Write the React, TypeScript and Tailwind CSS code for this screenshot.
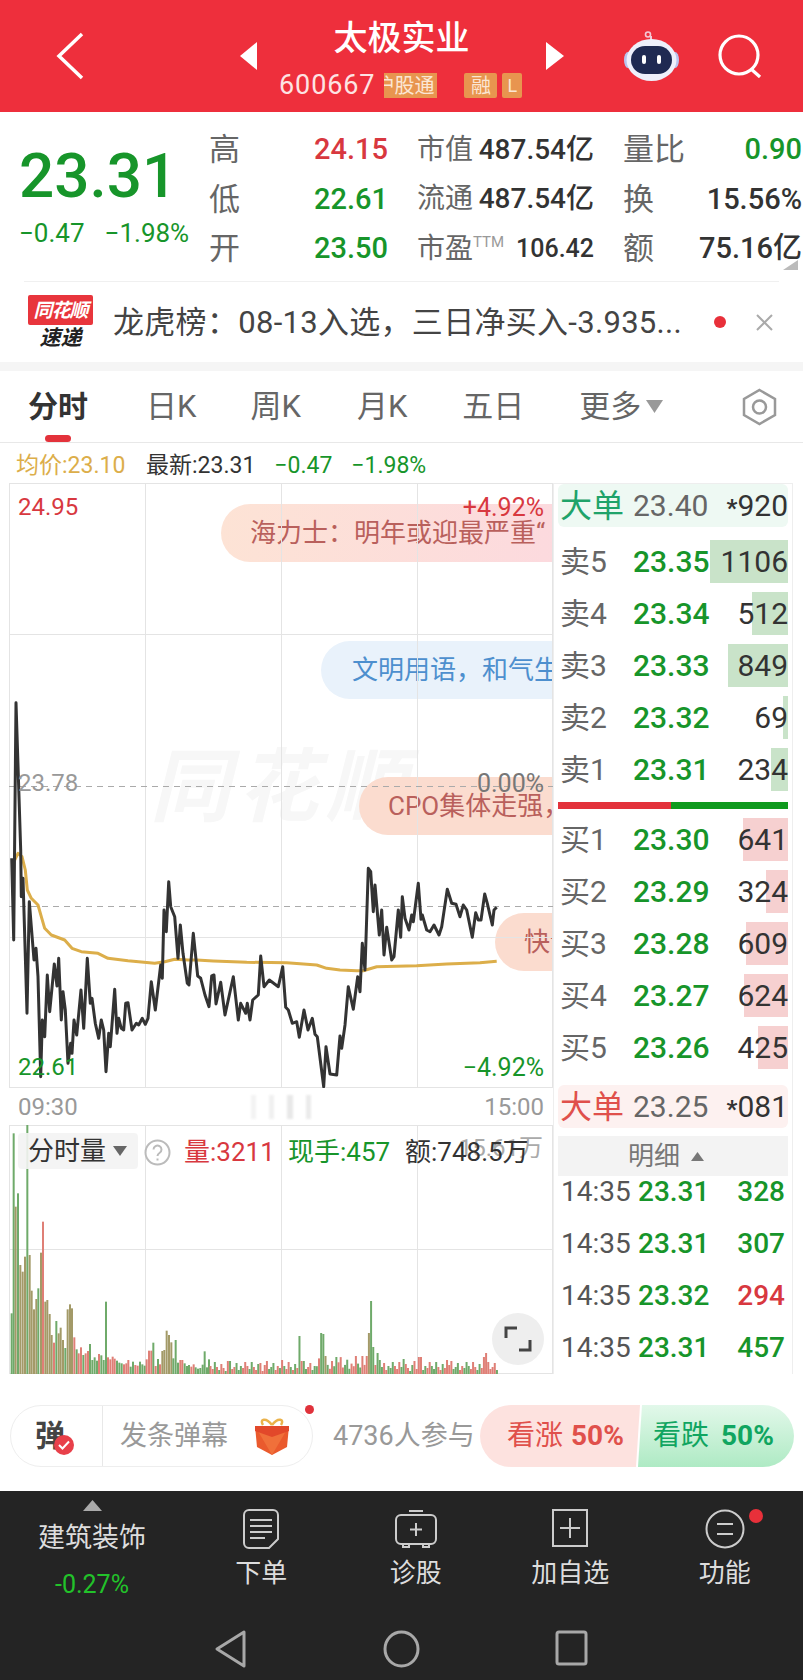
import React from 'react';

const GREEN = 'text-[#17952a]';

// price line, read off in page pixels
const fromA = (p: number[][]) => p.map(([x, y]) => [8 + x / 3, 690 + y / 3]);
const fromB = (p: number[][]) => p.map(([x, y]) => [180 + x / 3, 850 + y / 3]);
const fromC = (p: number[][]) => p.map(([x, y]) => [340 + x / 3, 850 + y / 3]);

const pricePoints = [
  ...fromA([[11,505],[17,750],[24,38],[38,480],[40,620],[45,565],[57,970],[64,635],[78,810],[84,775],[90,860],[98,1160],[103,990],[110,1040],[118,855],[125,965],[139,822],[147,888],[152,805],[160,990],[165,905],[172,960],[180,1120],[188,1060],[192,1090],[198,990],[206,1035],[219,900],[227,1015],[238,805],[247,940],[252,925],[262,1000],[272,1045],[280,990],[287,1020],[294,1145],[302,1030],[307,1070],[320,898],[327,1030],[332,985],[340,1015],[347,1020],[353,940],[360,938],[372,1020],[385,1000],[392,1005],[403,985],[412,1003],[420,985],[430,875],[442,960],[458,825],[463,865],[468,660],[475,725],[482,575],[488,650],[500,680],[510,805],[517,705],[525,790],[538,880]]),
  ...fromB([[27,405],[40,250],[53,378],[62,385],[75,435],[87,470],[95,378],[102,375],[108,462],[122,397],[135,495],[160,380],[175,510],[182,460],[197,490],[202,460],[210,510],[218,450],[235,435],[242,318],[252,410],[268,390],[295,410],[308,350],[317,472],[325,480],[337,520],[350,515],[358,562],[372,480],[384,540],[397,505],[405,553],[412,560],[431,710],[438,590],[450,672],[470,675],[480,558],[485,595],[495,525],[505,410],[520,478],[533,380],[540,425]]),
  ...fromC([[67,280],[75,360],[85,55],[92,65],[100,185],[105,105],[118,255],[125,180],[132,315],[140,232],[155,330],[162,320],[175,180],[182,262],[187,140],[195,205],[207,240],[215,195],[220,215],[235,100],[243,208],[247,195],[260,240],[270,245],[282,225],[297,255],[305,230],[322,118],[335,160],[348,163],[360,200],[370,165],[380,180],[397,262],[407,188],[415,210],[423,210],[434,132],[442,160],[457,225],[462,180],[470,172]]),
];

const avgPoints = [
  ...fromA([[20,510],[30,490],[42,500],[52,540],[58,600],[70,625],[90,645],[100,680],[110,715],[130,735],[170,750],[192,775],[220,785],[270,790],[300,805],[360,812],[440,820],[470,815],[500,808],[540,810]]),
  ...fromB([[50,330],[100,333],[200,337],[320,338],[410,345],[440,355],[480,360],[530,362]]),
  ...fromC([[50,362],[70,362],[110,350],[230,347],[320,342],[420,338],[470,334]]),
];

const toLine = (p: number[][]) => p.map(([x, y]) => `${x.toFixed(1)},${y.toFixed(1)}`).join(' ');

// volume bars: first stretch read one by one, the tail is low noise plus a few spikes
const headTops = [[11,580,'g'],[17,40,'g'],[23,260,'o'],[30,220,'g'],[37,435,'o'],[44,455,'o'],[51,410,'o'],[58,15,'g'],[65,405,'o'],[71,512,'o'],[78,568,'o'],[85,537,'o'],[91,505,'g'],[99,398,'o'],[105,305,'r'],[112,545,'o'],[118,540,'o'],[125,582,'o'],[131,645,'o'],[138,668,'r'],[145,603,'g'],[152,640,'o'],[158,623,'o'],[165,660,'o'],[172,684,'g'],[179,568,'o'],[186,553,'o'],[192,565,'o'],[199,652,'r'],[206,688,'g'],[212,700,'r'],[219,682,'r'],[226,705,'g'],[233,700,'r'],[240,693,'r'],[246,672,'g'],[253,720,'g'],[260,712,'g'],[267,722,'g'],[273,702,'r'],[280,706,'g'],[287,720,'g'],[294,545,'g'],[300,712,'r'],[307,718,'r'],[314,710,'r'],[320,716,'r'],[327,722,'g'],[334,728,'g'],[341,730,'g'],[348,733,'r'],[355,730,'r'],[361,720,'r'],[368,740,'g'],[375,725,'g'],[382,735,'r'],[389,737,'r'],[396,725,'g'],[403,733,'g'],[410,737,'g'],[416,718,'r'],[423,692,'r'],[430,692,'r'],[436,668,'g'],[443,738,'r'],[450,717,'g'],[456,733,'r'],[463,693,'o'],[469,690,'o'],[476,632,'o'],[483,645,'o'],[490,667,'o'],[496,715,'g'],[503,660,'g'],[510,728,'g'],[517,720,'r'],[523,720,'r'],[530,730,'g'],[537,738,'g'],[543,735,'g'],[550,740,'r'],[557,733,'r'],[563,742,'g'],[570,746,'g'],[577,744,'g'],[584,734,'g'],[590,694,'g'],[597,742,'g'],[603,718,'g']] as [number, number, string][];

const spikes: [number, number, string][] = [[227,13,'r'],[261,11,'r'],[283,14,'r'],[299,38,'g'],[301,13,'r'],[321,41,'g'],[323,40,'g'],[326,18,'o'],[337,17,'g'],[355,18,'r'],[362,18,'r'],[366,18,'r'],[369,41,'o'],[371,73,'g'],[373,27,'g'],[378,21,'g'],[380,14,'g'],[404,15,'g'],[418,17,'r'],[420,17,'r'],[447,14,'r'],[483,17,'r'],[486,21,'r'],[489,12,'r']];
const noise = [8,5,12,7,4,10,6,3,9,13,5,7,11,4,8,6,12];
const tints: Record<string, string> = { g: '#6faa6a', r: '#df7f76', o: '#a39a68' };

const volumeBars = (() => {
  const bars: { x: number; h: number; c: string }[] = headTops.map(([x, y, c]) => ({ x: 8 + x / 3, h: (762 - y) / 3, c }));
  let i = 0;
  for (let x = 210.5; x < 497; x += 2.17) {
    const spike = spikes.find((s) => Math.abs(s[0] - x) < 1.1);
    const scale = x > 315 && x < 375 ? 1.3 : 1;
    if (spike) bars.push({ x, h: spike[1], c: spike[2] });
    else bars.push({ x, h: noise[i % noise.length] * scale, c: i % 5 < 2 ? 'r' : i % 7 === 3 ? 'r' : 'g' });
    i++;
  }
  return bars;
})();

const asks = [
  { label: '卖5', price: '23.35', qty: '1106', bar: 'w-[78px]' },
  { label: '卖4', price: '23.34', qty: '512', bar: 'w-[36px]' },
  { label: '卖3', price: '23.33', qty: '849', bar: 'w-[60px]' },
  { label: '卖2', price: '23.32', qty: '69', bar: 'w-[5px]' },
  { label: '卖1', price: '23.31', qty: '234', bar: 'w-[17px]' },
];
const bids = [
  { label: '买1', price: '23.30', qty: '641', bar: 'w-[45px]' },
  { label: '买2', price: '23.29', qty: '324', bar: 'w-[22px]' },
  { label: '买3', price: '23.28', qty: '609', bar: 'w-[42px]' },
  { label: '买4', price: '23.27', qty: '624', bar: 'w-[44px]' },
  { label: '买5', price: '23.26', qty: '425', bar: 'w-[30px]' },
];
const ticks = [
  { price: '23.31', qty: '328', up: false },
  { price: '23.31', qty: '307', up: false },
  { price: '23.32', qty: '294', up: true },
  { price: '23.31', qty: '457', up: false },
];

const DepthRow = ({ row, tint }: { row: { label: string; price: string; qty: string; bar: string }; tint: string }) => (
  <div className="relative flex h-[43px] shrink-0 items-center pl-[2px] text-[30px] leading-none">
    <div className={`absolute right-0 top-0 h-full ${row.bar} ${tint}`} />
    <span className="relative w-[73px] text-[#666]">{row.label}</span>
    <span className={`relative font-medium ${GREEN}`}>{row.price}</span>
    <span className="relative ml-auto text-[#333]">{row.qty}</span>
  </div>
);

const Stat = ({ label, value, tone, small }: { label: string; value: string; tone: string; small?: boolean }) => (
  <div className="flex h-[49.5px] items-center justify-between whitespace-nowrap">
    <span className={small ? 'shrink-0 text-[28px] text-[#666]' : 'shrink-0 text-[31px] text-[#666]'}>{label}</span>
    <span className={`shrink-0 font-medium ${small ? 'text-[28px]' : 'text-[29px]'} ${tone}`}>{value}</span>
  </div>
);

export default function App() {
  return (
    <div className="flex h-[1680px] w-[803px] flex-col overflow-hidden bg-white leading-none [font-family:Roboto,'Noto_Sans_CJK_SC',sans-serif]">
      {/* header */}
      <div className="flex h-[112px] shrink-0 items-center bg-[#ee2f3c] pl-[56px] text-white">
        <svg width="28" height="48" viewBox="0 0 28 48" fill="none" stroke="white" strokeWidth="3.5">
          <path d="M26 2 3 24l23 22" />
        </svg>
        <svg className="ml-[156px]" width="17" height="28" viewBox="0 0 17 28" fill="#fff">
          <path d="M17 0v28L0 14z" />
        </svg>
        <div className="w-[289px] self-start pt-[21px]">
          <div className="text-center text-[34px] font-medium">太极实业</div>
          <div className="mt-[17px] flex items-center pl-[22px]">
            <span className="text-[27px] tracking-[0.9px] text-[#fde3e3]">600667</span>
            <span className="ml-[9px] flex h-[25px] w-[53px] items-center justify-end overflow-hidden whitespace-nowrap bg-[#e8954f] pr-[3px] text-[20px] text-[#fbe6d4]">
              沪股通
            </span>
            <span className="ml-[27px] flex h-[25px] w-[33px] items-center justify-center rounded-[2px] bg-[#e8954f] text-[20px] text-[#fbe6d4]">融</span>
            <span className="ml-[5px] flex h-[25px] w-[20px] items-center justify-center rounded-[2px] bg-[#e8954f] text-[18px] text-[#fbe6d4]">L</span>
          </div>
        </div>
        <svg width="18" height="28" viewBox="0 0 18 28" fill="#fff">
          <path d="M0 0v28l18-14z" />
        </svg>
        <svg className="ml-[60px]" width="55" height="50" viewBox="0 0 55 50">
          <path d="M27 10V5" stroke="#f3c9d6" strokeWidth="2" />
          <circle cx="24" cy="3.5" r="2.5" fill="none" stroke="#f3c9d6" strokeWidth="1.6" />
          <ellipse cx="4" cy="29" rx="4" ry="8" fill="#b9c3ee" />
          <ellipse cx="51" cy="29" rx="4" ry="8" fill="#b9c3ee" />
          <ellipse cx="27.5" cy="29" rx="25" ry="21" fill="#eef0fb" />
          <rect x="7" y="15" width="41" height="28" rx="14" fill="#1f2a52" />
          <rect x="18" y="24" width="4" height="9" rx="2" fill="#fff" />
          <rect x="33" y="24" width="4" height="9" rx="2" fill="#fff" />
        </svg>
        <svg className="ml-[39px]" width="45" height="44" viewBox="0 0 45 44" fill="none" stroke="white" strokeWidth="3.2">
          <circle cx="21" cy="21" r="19" />
          <path d="m33 35 9 8" />
        </svg>
      </div>

      {/* quote */}
      <div className="relative flex h-[169px] shrink-0 items-start pt-[13px]">
        <div className="w-[209px] shrink-0 pl-[19px]">
          <div className={`mt-[19px] text-[62px] font-medium leading-[64px] ${GREEN}`}>23.31</div>
          <div className={`mt-[12px] flex text-[26px] ${GREEN}`}>
            <span>−0.47</span>
            <span className="ml-[20px]">−1.98%</span>
          </div>
        </div>
        <div className="grid grid-cols-[179px_177px_179px] gap-x-[29px]">
          <Stat label="高" value="24.15" tone="text-[#d8383f]" />
          <Stat label="市值" value="487.54亿" tone="text-[#333]" small />
          <Stat label="量比" value="0.90" tone={GREEN} />
          <Stat label="低" value="22.61" tone={GREEN} />
          <Stat label="流通" value="487.54亿" tone="text-[#333]" small />
          <Stat label="换" value="15.56%" tone="text-[#333]" />
          <Stat label="开" value="23.50" tone={GREEN} />
          <div className="flex h-[49.5px] items-center justify-between whitespace-nowrap">
            <span className="flex items-start text-[28px] text-[#666]">
              市盈<span className="text-[15px] text-[#999]">TTM</span>
            </span>
            <span className="text-[25px] font-medium text-[#333]">106.42</span>
          </div>
          <Stat label="额" value="75.16亿" tone="text-[#333]" />
        </div>
        <div className="absolute right-[5px] top-[148px] h-[10px] w-[15px] bg-[#bbb] [clip-path:polygon(100%_0,100%_100%,0_100%)]" />
      </div>

      {/* news */}
      <div className="mx-[24px] flex h-[81px] shrink-0 items-center border-t border-[#f0f0f0] pl-[4px]">
        <div className="flex w-[65px] shrink-0 flex-col items-center">
          <div className="flex h-[30px] w-[65px] items-center justify-center rounded-[2px] bg-[#e8353c] text-[19px] font-bold italic tracking-[-1px] text-white">同花顺</div>
          <div className="mt-[3px] text-[21px] font-bold italic text-[#222]">速递</div>
        </div>
        <span className="ml-[20px] w-[582px] shrink-0 whitespace-nowrap text-[31px] tracking-[0.3px] text-[#444]">龙虎榜：08-13入选，三日净买入-3.935...</span>
        <span className="ml-[19px] h-[12px] w-[12px] shrink-0 rounded-full bg-[#e8303a]" />
        <svg className="ml-[29px] shrink-0" width="19" height="19" viewBox="0 0 19 19" stroke="#aaa" strokeWidth="2">
          <path d="m2 2 15 15M17 2 2 17" />
        </svg>
      </div>
      <div className="h-[9px] shrink-0 bg-[#f5f5f5]" />

      {/* tabs */}
      <div className="flex h-[72px] shrink-0 items-center border-b border-[#e8e8e8] pl-[28px] text-[31px] text-[#666]">
        <div className="relative flex h-full w-[60px] items-center text-[30px] font-bold text-[#333]">
          分时
          <div className="absolute bottom-0 left-[17px] h-[7px] w-[26px] rounded-full bg-[#e3323b]" />
        </div>
        <span className="ml-[58px]">日K</span>
        <span className="ml-[54px]">周K</span>
        <span className="ml-[56px]">月K</span>
        <span className="ml-[55px]">五日</span>
        <span className="ml-[55px]">更多</span>
        <svg className="ml-[5px]" width="17" height="13" viewBox="0 0 17 13" fill="#999">
          <path d="M0 0h17L8.500 13z" />
        </svg>
        <svg className="ml-[79px]" width="35" height="38" viewBox="0 0 35 38" fill="none" stroke="#999" strokeWidth="2.500">
          <path d="M17.500 2 33 11v16l-15.500 9L2 27V11z" />
          <circle cx="17.500" cy="19" r="6.500" />
        </svg>
      </div>

      {/* current values line */}
      <div className="flex h-[40px] shrink-0 items-center pl-[16px] pt-[4px] text-[23px]">
        <span className="w-[130px] text-[#dcae4a]">均价:23.10</span>
        <span className="text-[#333]">最新:23.31</span>
        <span className={`ml-[19px] ${GREEN}`}>−0.47</span>
        <span className={`ml-[19px] ${GREEN}`}>−1.98%</span>
      </div>

      <div className="flex h-[891px] shrink-0">
        {/* charts */}
        <div className="w-[553px] shrink-0 pl-[9px]">
          <div className="relative h-[605px] w-[544px] overflow-hidden">
            <div className="absolute left-[141px] top-[265px] text-[80px] font-bold italic tracking-[8px] text-[#f7f7f7]">同花顺</div>
            <div className="absolute left-[212px] top-[21px] flex h-[58px] w-[360px] items-center overflow-hidden whitespace-nowrap rounded-l-[29px] bg-gradient-to-r from-[#fde3d5] to-[#fcd9df] pl-[29px] text-[26px] text-[#b9605c]">
              海力士：明年或迎最严重“
            </div>
            <div className="absolute left-[312px] top-[158px] flex h-[58px] w-[280px] items-center overflow-hidden whitespace-nowrap rounded-l-[29px] bg-[#e9f2fb] pl-[31px] text-[26px] text-[#4d8fce]">
              文明用语，和气生财
            </div>
            <div className="absolute left-[350px] top-[294px] flex h-[58px] w-[260px] items-center overflow-hidden whitespace-nowrap rounded-l-[29px] bg-[#fbdccf] pl-[29px] text-[26px] text-[#b9605c]">
              CPO集体走强，
            </div>
            <div className="absolute left-[486px] top-[430px] flex h-[58px] w-[120px] items-center overflow-hidden whitespace-nowrap rounded-l-[29px] bg-[#fbdccf] pl-[29px] text-[26px] text-[#b9605c]">
              快讯
            </div>
            <svg className="absolute left-0 top-0" width="544" height="605" viewBox="9 483 544 605" fill="none">
              <g stroke="#e4e4e4" strokeWidth="1">
                <path d="M9.500 483v605M145.500 483v605M281.500 483v605M417.500 483v605M552.500 483v605" />
                <path d="M9 483.500h544M9 634.500h544M9 937.500h544M9 1087.500h544" />
              </g>
              <path d="M9 786.500h544" stroke="#aaa" strokeDasharray="6 5" />
              <path d="M9 906.500h544" stroke="#aaa" strokeDasharray="6 5" />
              <polyline points={toLine(avgPoints)} stroke="#dcae4a" strokeWidth="3" strokeLinejoin="round" />
              <polyline points={toLine(pricePoints)} stroke="#333" strokeWidth="3" strokeLinejoin="round" />
            </svg>
            <span className="absolute left-[9px] top-[12px] text-[24px] text-[#d8383f]">24.95</span>
            <span className="absolute right-[9px] top-[12px] text-[25px] text-[#d8383f]">+4.92%</span>
            <span className="absolute left-[9px] top-[288px] text-[24px] text-[#999]">23.78</span>
            <span className="absolute right-[9px] top-[288px] text-[25px] text-[#777]">0.00%</span>
            <span className={`absolute left-[9px] top-[572px] text-[24px] ${GREEN}`}>22.61</span>
            <span className={`absolute right-[9px] top-[572px] text-[25px] ${GREEN}`}>−4.92%</span>
          </div>
          <div className="relative flex h-[37px] w-[544px] items-center justify-between px-[9px] text-[24px] text-[#999]">
            <span>09:30</span>
            <div className="flex h-[24px] items-stretch gap-[13px] blur-[1px]">
              <span className="w-[5px] bg-[#f3f3f3]" />
              <span className="w-[5px] bg-[#f0f0f0]" />
              <span className="w-[6px] bg-[#e8e8e8]" />
              <span className="w-[5px] bg-[#ebebeb]" />
            </div>
            <span>15:00</span>
          </div>
          <div className="relative h-[249px] w-[544px] overflow-hidden">
            <svg className="absolute left-0 top-0" width="544" height="249" viewBox="9 1125 544 249" fill="none">
              <g stroke="#e4e4e4" strokeWidth="1">
                <path d="M9.500 1125v249M145.500 1125v249M281.500 1125v249M417.500 1125v249M552.500 1125v249" />
                <path d="M9 1125.500h544M9 1249.500h544M9 1373.500h544" />
              </g>
              {volumeBars.map((b, i) => (
                <rect key={i} x={b.x - 1} y={1374 - b.h} width="2" height={b.h} fill={tints[b.c]} />
              ))}
            </svg>
            <span className="absolute right-[10px] top-[11px] text-[24px] text-[#aaa]">15.61万</span>
            <div className="absolute left-[9px] top-[8px] flex h-[36px] w-[120px] items-center rounded-[4px] bg-[#f3f3f3]/90 pl-[10px] text-[26px] text-[#333]">
              分时量
              <svg className="ml-[7px]" width="14" height="10" viewBox="0 0 14 10" fill="#666">
                <path d="M0 0h14L7 10z" />
              </svg>
            </div>
            <svg className="absolute left-[135px] top-[14px]" width="27" height="27" viewBox="0 0 27 27" fill="none">
              <circle cx="13.500" cy="13.500" r="12" stroke="#bbb" strokeWidth="2" />
              <path d="M9.500 10.500a4 4 0 1 1 6 3.500c-1.300.8-2 1.400-2 3M13.500 19.500v2" stroke="#bbb" strokeWidth="2" />
            </svg>
            <div className="absolute left-[175px] top-[14px] flex text-[26px]">
              <span className="w-[104px] text-[#d8383f]">量:3211</span>
              <span className={`w-[117px] ${GREEN}`}>现手:457</span>
              <span className="text-[#333]">额:748.5万</span>
            </div>
            <div className="absolute left-[483px] top-[188px] flex h-[52px] w-[52px] items-center justify-center rounded-full bg-[#eeeeee]">
              <svg width="28" height="28" viewBox="0 0 28 28" fill="none" stroke="#444" strokeWidth="3">
                <path d="M2 13V3h11M26 15v10H15" />
              </svg>
            </div>
          </div>
        </div>

        {/* order book */}
        <div className="relative flex h-[891px] w-[240px] shrink-0 flex-col border-x border-[#eeeeee] px-[4px] pt-[1px]">
          <div className="absolute inset-x-0 top-0 border-t border-[#eeeeee]" />
          <div className="flex h-[43px] shrink-0 items-center rounded-[6px] bg-[#eef9f3] pl-[2px] text-[30px]">
            <span className="w-[73px] text-[32px] text-[#1fa36a]">大单</span>
            <span className="text-[#666]">23.40</span>
            <span className="ml-auto text-[#333]">
              <span className="text-[24px] font-bold">*</span>920
            </span>
          </div>
          <div className="mt-[13px] flex shrink-0 flex-col gap-[9px]">
            {asks.map((row) => (
              <DepthRow key={row.label} row={row} tint="bg-[#c9e3c9]" />
            ))}
          </div>
          <div className="mt-[11px] flex h-[7px] shrink-0">
            <div className="w-[113px] bg-[#e3323b]" />
            <div className="flex-1 bg-[#0f9a1e]" />
          </div>
          <div className="mt-[9px] flex shrink-0 flex-col gap-[9px]">
            {bids.map((row) => (
              <DepthRow key={row.label} row={row} tint="bg-[#f6d0d0]" />
            ))}
          </div>
          <div className="mt-[16px] flex h-[43px] shrink-0 items-center rounded-[6px] bg-[#fdf1f0] pl-[2px] text-[30px]">
            <span className="w-[73px] text-[32px] text-[#e0504b]">大单</span>
            <span className="text-[#666]">23.25</span>
            <span className="ml-auto text-[#333]">
              <span className="text-[24px] font-bold">*</span>081
            </span>
          </div>
          <div className="mt-[8px] flex h-[40px] shrink-0 items-center justify-center bg-[#f3f3f3] pr-[14px] text-[26px] text-[#777]">
            明细
            <svg className="ml-[11px]" width="13" height="9" viewBox="0 0 13 9" fill="#777">
              <path d="M6.500 0 13 9H0z" />
            </svg>
          </div>
          <div className="flex h-[197px] shrink-0 flex-col">
            {ticks.map((t, i) => (
              <div key={i} className="flex h-[52px] shrink-0 items-center pb-[20px] pl-[3px] pr-[3px] text-[28px]">
                <span className="w-[77px] text-[#555]">14:35</span>
                <span className={`font-medium ${GREEN}`}>{t.price}</span>
                <span className={`ml-auto font-medium ${t.up ? 'text-[#d8383f]' : GREEN}`}>{t.qty}</span>
              </div>
            ))}
          </div>
        </div>
      </div>

      {/* danmaku bar */}
      <div className="flex h-[117px] shrink-0 items-center pl-[10px] pt-[7px]">
        <div className="relative flex h-[62px] w-[303px] items-center rounded-full border border-[#eeeeee]">
          <div className="relative flex h-full w-[92px] shrink-0 items-center border-r border-[#e8e8e8] pl-[24px] text-[30px] font-bold text-[#444]">
            弹
            <div className="absolute left-[43px] top-[29px] flex h-[20px] w-[20px] items-center justify-center rounded-full bg-[#e8404a]">
              <svg width="12" height="10" viewBox="0 0 12 10" fill="none" stroke="#fff" strokeWidth="2">
                <path d="m1 5 3.500 3.500L11 1.500" />
              </svg>
            </div>
          </div>
          <span className="ml-[17px] text-[27px] text-[#999]">发条弹幕</span>
          <svg className="ml-[26px]" width="36" height="38" viewBox="0 0 36 38">
            <path d="M18 8C12 0 5 2 9 8M18 8c6-8 13-6 9 0" fill="none" stroke="#eab24a" strokeWidth="2.500" />
            <path d="M1 9h34l-2 21-15 8-15-8z" fill="#ea5a2d" />
            <path d="M18 9v29L1 9zM18 9v29L35 9z" fill="#f0703a" />
            <path d="M1 9h34v5L18 20 1 14z" fill="#e2482a" />
          </svg>
          <span className="absolute right-[-2px] top-[-1px] h-[9px] w-[9px] rounded-full bg-[#e0323b]" />
        </div>
        <span className="ml-[20px] w-[147px] whitespace-nowrap text-[27px] text-[#999]">4736人参与</span>
        <div className="flex h-[62px] w-[314px]">
          <div className="flex w-[160px] items-center whitespace-nowrap rounded-l-full bg-[#fde2df] pl-[27px] text-[28px] text-[#e0504b] [clip-path:polygon(0_0,100%_0,calc(100%-4px)_100%,0_100%)]">
            看涨<span className="ml-[8px] font-bold">50%</span>
          </div>
          <div className="-ml-[2px] flex flex-1 items-center whitespace-nowrap rounded-r-full bg-gradient-to-b from-[#e2f8ea] to-[#aeeac4] pl-[15px] text-[28px] text-[#10a560] [clip-path:polygon(4px_0,100%_0,100%_100%,0_100%)]">
            看跌<span className="ml-[12px] font-bold">50%</span>
          </div>
        </div>
      </div>

      {/* bottom bar */}
      <div className="flex flex-1 flex-col bg-[#242424]">
        <div className="grid h-[125px] grid-cols-[184px_repeat(4,154.500px)] text-[26px] text-[#dddddd]">
          <div className="flex flex-col items-center pt-[9px]">
            <svg width="19" height="11" viewBox="0 0 19 11" fill="#aaa">
              <path d="M9.500 0 19 11H0z" />
            </svg>
            <span className="mt-[14px] whitespace-nowrap text-[27px]">建筑装饰</span>
            <span className="mt-[20px] text-[25px] text-[#22c22a]">-0.27%</span>
          </div>
          <div className="flex flex-col items-center pt-[18px]">
            <svg width="36" height="40" viewBox="0 0 36 40" fill="none" stroke="#cccccc" strokeWidth="2">
              <path d="M6 1h24a5 5 0 0 1 5 5v24l-9 9H6a5 5 0 0 1-5-5V6a5 5 0 0 1 5-5z" />
              <path d="M7 11h22M7 17h22M7 23h22M7 29h15" />
            </svg>
            <span className="mt-[11px]">下单</span>
          </div>
          <div className="flex flex-col items-center pt-[18px]">
            <svg width="42" height="40" viewBox="0 0 42 40" fill="none" stroke="#cccccc" strokeWidth="2">
              <rect x="1" y="6" width="40" height="29" rx="5" />
              <path d="M14 2h14M8 35v3h6v-3M28 35v3h6v-3M21 14v13M15 20.500h12" />
            </svg>
            <span className="mt-[11px]">诊股</span>
          </div>
          <div className="flex flex-col items-center pt-[18px]">
            <svg width="36" height="40" viewBox="0 0 36 40" fill="none" stroke="#cccccc" strokeWidth="2">
              <rect x="1" y="1" width="34" height="36" />
              <path d="M18 9v20M8 19h20" />
            </svg>
            <span className="mt-[11px]">加自选</span>
          </div>
          <div className="relative flex flex-col items-center pt-[18px]">
            <svg width="40" height="40" viewBox="0 0 40 40" fill="none" stroke="#cccccc" strokeWidth="2">
              <circle cx="20" cy="20" r="18.500" />
              <path d="M12 15h16M12 25h16" />
            </svg>
            <span className="mt-[11px]">功能</span>
            <span className="absolute left-[101px] top-[18px] h-[14px] w-[14px] rounded-full bg-[#e8303a]" />
          </div>
        </div>
        <div className="flex flex-1 items-start pl-[214px] pt-[14px]">
          <svg className="mr-[136px]" width="33" height="38" viewBox="0 0 33 38" fill="none" stroke="#a8a8a8" strokeWidth="3">
            <path d="M30 2v34L3 19z" strokeLinejoin="round" />
          </svg>
          <svg className="mr-[135px]" width="37" height="38" viewBox="0 0 37 38" fill="none" stroke="#a8a8a8" strokeWidth="3">
            <ellipse cx="18.500" cy="19" rx="16.500" ry="17" />
          </svg>
          <svg width="33" height="36" viewBox="0 0 33 36" fill="none" stroke="#a8a8a8" strokeWidth="3">
            <rect x="2" y="2" width="29" height="32" rx="2" />
          </svg>
        </div>
      </div>
    </div>
  );
}
